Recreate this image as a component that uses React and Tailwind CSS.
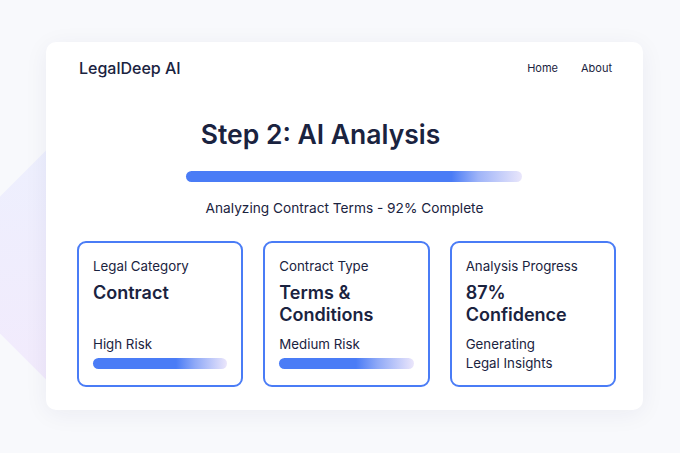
import React from 'react';

const cards = [
  { label: 'Legal Category', value: ['Contract'], risk: 'High Risk', bar: 'bg-[linear-gradient(90deg,#4a7cf6_62%,#8fa9f7_76%,#ebe6fb_100%)]' },
  { label: 'Contract Type', value: ['Terms &', 'Conditions'], risk: 'Medium Risk', bar: 'bg-[linear-gradient(90deg,#4a7cf6_57%,#8fa9f7_73%,#ebe6fb_100%)]' },
  { label: 'Analysis Progress', value: ['87%', 'Confidence'], note: ['Generating', 'Legal Insights'] },
];

const InfoCard = ({ card }) => (
  <div className="h-[146px] rounded-[9px] border-2 border-[#4a7cf6] bg-white px-[14px] pt-[14px]">
    <div className="text-[13.3px] leading-[18px] text-[#1a2340]">{card.label}</div>
    <div className="mt-[7px] min-h-[44px] text-[18px] font-semibold leading-[22px] text-[#1a2340]">
      {card.value.map((line) => (
        <div key={line}>{line}</div>
      ))}
    </div>
    {card.risk ? (
      <div className="mt-[9px]">
        <div className="text-[13.3px] leading-[18px] text-[#1a2340]">{card.risk}</div>
        <div className={`mt-[5px] h-[11px] w-full rounded-full ${card.bar}`} />
      </div>
    ) : (
      <div className="mt-[9px] text-[13.3px] leading-[19px] text-[#1a2340]">
        {card.note.map((line) => (
          <div key={line}>{line}</div>
        ))}
      </div>
    )}
  </div>
);

export default function App() {
  return (
    <div className="relative h-[453px] w-[680px] overflow-hidden bg-[#f8f9fc] font-['Inter',sans-serif]">
      {/* decorative diamond behind the panel */}
      <div className="absolute left-[-28px] top-[167px] h-[196px] w-[196px] rotate-45 bg-linear-to-br from-[#edf0fe] to-[#f2eafc]" />

      <div className="relative z-10 ml-[46px] mt-[42px] h-[368px] w-[597px] rounded-[10px] bg-white px-[31px] pt-[14px] shadow-[0_4px_24px_rgba(30,40,90,0.06)]">
        <div className="flex h-[24px] items-center justify-between">
          <div className="pl-[2px] text-[16px] font-medium text-[#1a2340]">LegalDeep AI</div>
          <div className="flex items-center gap-[23px] pt-[1px] text-[11px] text-[#1a2340]">
            <span>Home</span>
            <span>About</span>
          </div>
        </div>

        <div className="flex flex-col items-center">
          <h1 className="mr-[48px] mt-[38px] text-[26.5px] font-semibold leading-[32px] text-[#1a2340]">
            Step 2: AI Analysis
          </h1>
          <div className="ml-[19px] mt-[21px] h-[11px] w-[336px] rounded-full bg-[linear-gradient(90deg,#4a7cf6_79%,#9fb4f8_87%,#e9e6fb_100%)]" />
          <p className="mt-[17px] text-[13.7px] leading-[18px] text-[#1a2340]">
            Analyzing Contract Terms - 92% Complete
          </p>
        </div>

        <div className="mt-[24px] grid w-[539px] grid-cols-3 gap-[20px]">
          {cards.map((card) => (
            <InfoCard key={card.label} card={card} />
          ))}
        </div>
      </div>
    </div>
  );
}
